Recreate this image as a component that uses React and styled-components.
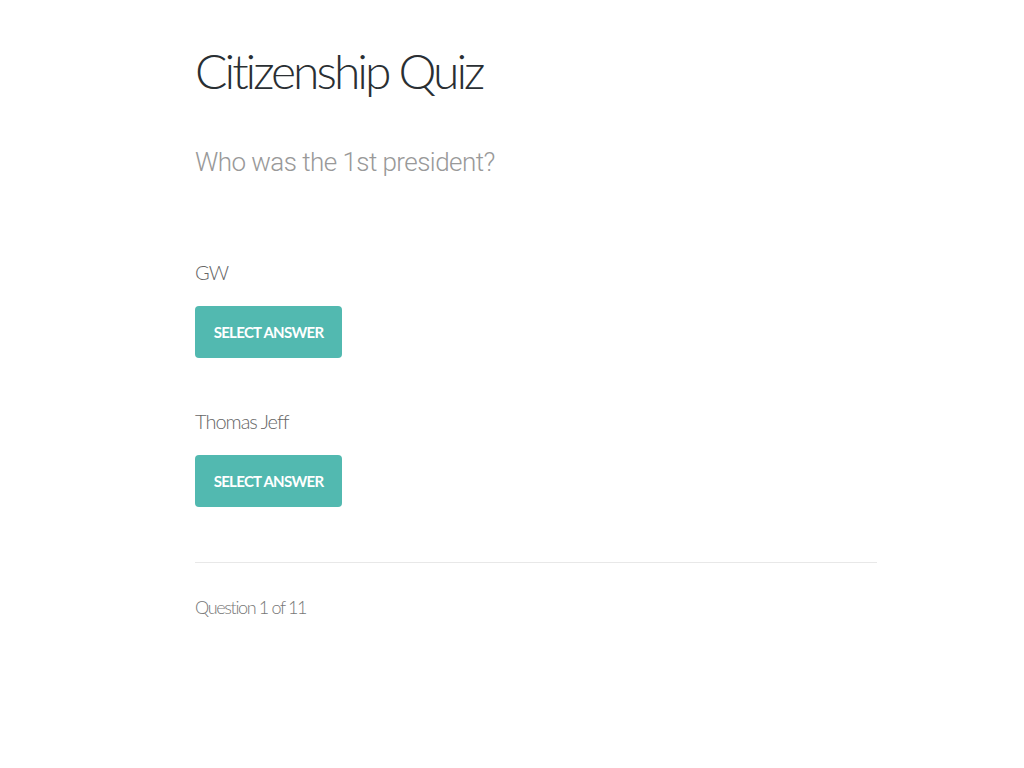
import React from "react";
import styled, { createGlobalStyle } from "styled-components";

const GlobalStyle = createGlobalStyle`
  body {
    margin: 0;
    background: #fff;
    font-family: Lato, "Open Sans", sans-serif;
  }
`;

const Page = styled.div`
  width: 682px;
  margin-left: 195px;
  padding-top: 36px;
`;

const Title = styled.h1`
  margin: 0;
  font-family: Lato, sans-serif;
  font-weight: 300;
  font-size: 48px;
  line-height: 70px;
  letter-spacing: -3px;
  color: #2a2f33;
`;

const Question = styled.h2`
  margin: 38px 0 0;
  font-family: Roboto, "Liberation Sans", sans-serif;
  font-weight: 300;
  font-size: 26px;
  line-height: 36px;
  letter-spacing: -0.55px;
  color: #999;
`;

const Answers = styled.div`
  margin-top: 78px;
  display: flex;
  flex-direction: column;
  gap: 49px;
`;

const Answer = styled.div`
  display: flex;
  flex-direction: column;
  align-items: flex-start;
  gap: 20px;
`;

const AnswerText = styled.p`
  margin: 0;
  font-family: Lato, sans-serif;
  font-weight: 300;
  font-size: 20px;
  line-height: 28px;
  letter-spacing: -1px;
  color: #666;
`;

const Button = styled.button`
  width: 147px;
  height: 52px;
  padding: 0;
  background: #52b9b0;
  border: none;
  border-radius: 4px;
  color: #fff;
  font-family: Lato, sans-serif;
  font-weight: 700;
  font-size: 15px;
  letter-spacing: -0.7px;
  text-transform: uppercase;
  cursor: pointer;
`;

const Divider = styled.hr`
  margin: 55px 0 0;
  border: none;
  border-top: 1px solid #e8e8e8;
`;

const Progress = styled.p`
  margin: 33px 0 0;
  font-family: Lato, sans-serif;
  font-weight: 300;
  font-size: 18px;
  letter-spacing: -1.35px;
  color: #777;
`;

const answers = ["GW", "Thomas Jeff"];

export default function App() {
  return (
    <>
      <GlobalStyle />
      <Page>
        <Title>Citizenship Quiz</Title>
        <Question>Who was the 1st president?</Question>
        <Answers>
          {answers.map((a) => (
            <Answer key={a}>
              <AnswerText>{a}</AnswerText>
              <Button>Select Answer</Button>
            </Answer>
          ))}
        </Answers>
        <Divider />
        <Progress>Question 1 of 11</Progress>
      </Page>
    </>
  );
}
